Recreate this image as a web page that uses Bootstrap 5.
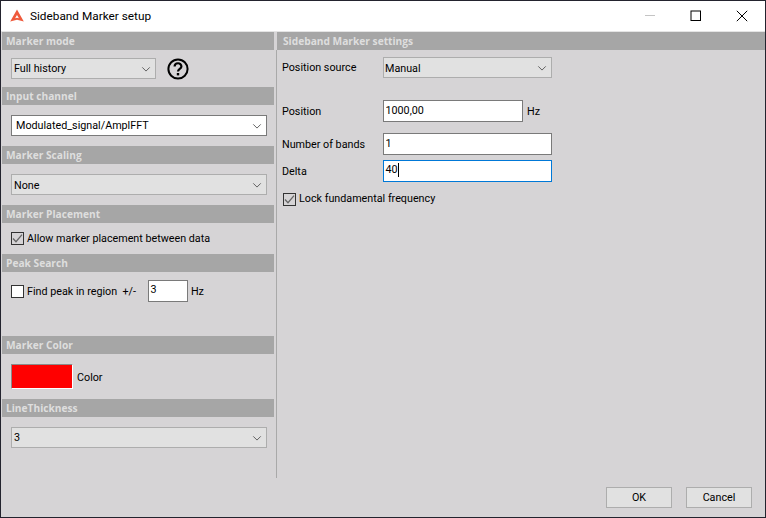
<!DOCTYPE html>
<html lang="en">
<head>
<meta charset="utf-8">
<title>Sideband Marker setup</title>
<link href="https://cdn.jsdelivr.net/npm/bootstrap@5.3.0/dist/css/bootstrap.min.css" rel="stylesheet">
<style>
html,body{height:518px;overflow:hidden;background:#d6d4d6;}
body{font-family:Roboto,"Open Sans","Liberation Sans",sans-serif;font-size:10.75px;color:#000;line-height:1.2;}
.win{width:766px;height:518px;border:1px solid #23232e;background:#d6d4d6;}
.tbar{height:31px;background:#fff;flex:none;border-bottom:1px solid #e4e4e4;padding-left:9px;}
.tbar-title{font-size:11.8px;margin-left:6px;}
.wc{width:46px;height:30px;}
.sect-left{width:275px;flex:none;height:446px;padding:0 2px 0 1px;}
.sect-right{height:446px;}
.hdr{height:18px;background:#a6a6a6;color:#dedede;font-family:"Open Sans",sans-serif;font-weight:700;font-size:10.2px;line-height:18px;padding-left:4px;flex:none;}
.hdr-r{padding-left:6px;}
.divider{width:1px;background:#a9a9a9;height:428px;margin-top:18px;flex:none;}
.body-l{padding-left:9px;padding-right:7px;}
.h37{height:37px;}.h41{height:41px;}.h31{height:31px;}.h64{height:64px;}.h45{height:45px;}
.sel{font-size:10.75px;height:21px;min-height:21px;padding:0 0 0 2px;border-radius:0;border:1px solid #adadad;background-color:#e1e1e1;color:#000;line-height:19px;background-size:10px 10px;background-position:right 4px center;--bs-form-select-bg-img:none;background-image:url("data:image/svg+xml,%3csvg xmlns='http://www.w3.org/2000/svg' viewBox='0 0 12 12'%3e%3cpath fill='none' stroke='%23555' stroke-width='1.1' d='M1.500 4l4.500 4.500 4.500-4.500'/%3e%3c/svg%3e");}
.sel-white{background-color:#fff;border-color:#7a7a7a;padding-left:4px;}
.sel-low{padding-top:1px;}
.sel-mode{width:145px;}
.sel-source{width:169px;padding-left:1px;}
.fld{font-size:10.75px;border-radius:0;border:1px solid #7a7a7a;padding:0 0 2px 1.500px;height:22px;min-height:22px;color:#000;background:#fff;line-height:18px;}
.fld-small{width:40px;height:21px;margin-left:12px;margin-right:3px;padding-bottom:4px;}
.fld-pos{width:140px;margin-right:4px;}
.fld-full{width:169px;}
.fld-focus{border-color:#0078d7;display:flex;align-items:center;}
.caret-bar{display:inline-block;width:1px;height:14px;background:#000;}
.form-check-input.chk{width:13px;height:13px;margin:0 3px 0 0;border-radius:0;border:1px solid #333;background-color:#fff;flex:none;}
.form-check-input.chk:checked{background-color:transparent;border-color:#333;background-image:url("data:image/svg+xml,%3csvg xmlns='http://www.w3.org/2000/svg' viewBox='0 0 13 13'%3e%3cpath fill='none' stroke='%23666' stroke-width='1.3' d='M2 6.500l3 3.200 6-7'/%3e%3c/svg%3e");background-size:13px 13px;}
.swatch{width:62px;height:25px;background:#f00;border:1px solid #fff;border-top-color:#8a8a8a;border-left-color:#8a8a8a;margin-right:4px;}
.nudge1{padding-top:2px;}
.nudge2{padding-top:3px;}
.help{margin-left:11px;}
.body-r{padding:7px 0 0 5px;}
.lbl{width:101px;flex:none;padding-top:2px;}
.row-src{height:21px;margin-bottom:22px;}
.row-pos{height:22px;margin-bottom:11px;}
.row-num{height:22px;margin-bottom:5px;}
.row-chk{padding-left:1px;margin-top:11px;}
.foot{height:39px;padding:9px 13px 0 0;gap:14px;flex:none;}
.dbtn{width:66px;height:21px;padding:0;border-radius:0;font-size:10.75px;line-height:19px;border:1px solid #adadad;background:#e1e1e1;color:#000;}
.logo{flex:none;}
</style>
</head>
<body>
<div class="win d-flex flex-column">
  <div class="tbar d-flex align-items-center">
    <svg class="logo" width="14" height="14" viewBox="0 0 14 14"><path fill="#ef5a3c" d="M7 .5 13.800 12.600 7 10.800.2 12.600z"/><path fill="#fff" d="M7 6 8.900 9.200 7 8.700 5.100 9.200z"/></svg>
    <span class="tbar-title">Sideband Marker setup</span>
    <div class="ms-auto d-flex">
      <div class="wc d-flex align-items-center justify-content-center"><svg width="12" height="12" viewBox="0 0 12 12"><path stroke="#c4c4c4" d="M1 5.500h10"/></svg></div>
      <div class="wc d-flex align-items-center justify-content-center"><svg width="12" height="12" viewBox="0 0 12 12"><rect x="1" y="1" width="9.500" height="9.500" fill="none" stroke="#000"/></svg></div>
      <div class="wc d-flex align-items-center justify-content-center"><svg width="12" height="12" viewBox="0 0 12 12"><path stroke="#000" fill="none" d="M.8.8l10.400 10.400M11.200.8.8 11.200"/></svg></div>
    </div>
  </div>
  <div class="d-flex flex-grow-1">
    <div class="sect-left d-flex flex-column">
      <div class="hdr">Marker mode</div>
      <div class="body-l h37 d-flex align-items-center">
        <select class="form-select sel sel-mode"><option>Full history</option></select>
        <svg class="help" width="22" height="22" viewBox="0 0 22 22"><circle cx="11" cy="11" r="9.600" fill="none" stroke="#000" stroke-width="2"/><path fill="none" stroke="#000" stroke-width="2.200" d="M7.600 8.600c0-4.400 6.800-4.400 6.800-.2 0 2.600-3.400 2.500-3.400 5.200"/><rect x="9.800" y="15" width="2.400" height="2.400"/></svg>
      </div>
      <div class="hdr">Input channel</div>
      <div class="body-l h41 d-flex align-items-center">
        <select class="form-select sel sel-white"><option>Modulated_signal/AmplFFT</option></select>
      </div>
      <div class="hdr">Marker Scaling</div>
      <div class="body-l h41 d-flex align-items-center">
        <select class="form-select sel sel-low"><option>None</option></select>
      </div>
      <div class="hdr">Marker Placement</div>
      <div class="body-l h31 d-flex align-items-center">
        <input class="form-check-input chk" type="checkbox" checked id="c1">
        <label for="c1" class="nudge1">Allow marker placement between data</label>
      </div>
      <div class="hdr">Peak Search</div>
      <div class="body-l h64 d-flex align-items-start">
        <div class="d-flex align-items-center mt-2">
          <input class="form-check-input chk" type="checkbox" id="c2">
          <label for="c2" class="nudge1">Find peak in region&nbsp; +/-</label>
          <input class="form-control fld fld-small" type="text" value="3">
          <span class="nudge1">Hz</span>
        </div>
      </div>
      <div class="hdr">Marker Color</div>
      <div class="body-l h45 d-flex align-items-center">
        <div class="swatch"></div><span class="nudge2">Color</span>
      </div>
      <div class="hdr">LineThickness</div>
      <div class="body-l h41 d-flex align-items-center">
        <select class="form-select sel"><option>3</option></select>
      </div>
    </div>
    <div class="divider"></div>
    <div class="sect-right flex-grow-1 d-flex flex-column">
      <div class="hdr hdr-r">Sideband Marker settings</div>
      <div class="body-r">
        <div class="d-flex align-items-center row-src">
          <span class="lbl">Position source</span>
          <select class="form-select sel sel-source sel-low"><option>Manual</option></select>
        </div>
        <div class="d-flex align-items-center row-pos">
          <span class="lbl">Position</span>
          <input class="form-control fld fld-pos" type="text" value="1000,00">
          <span class="nudge1">Hz</span>
        </div>
        <div class="d-flex align-items-center row-num">
          <span class="lbl">Number of bands</span>
          <input class="form-control fld fld-full" type="text" value="1">
        </div>
        <div class="d-flex align-items-center row-num">
          <span class="lbl">Delta</span>
          <div class="fld fld-full fld-focus">40<span class="caret-bar"></span></div>
        </div>
        <div class="d-flex align-items-center row-chk">
          <input class="form-check-input chk" type="checkbox" checked id="c3">
          <label for="c3">Lock fundamental frequency</label>
        </div>
      </div>
    </div>
  </div>
  <div class="foot d-flex justify-content-end align-items-start">
    <button type="button" class="btn dbtn">OK</button>
    <button type="button" class="btn dbtn">Cancel</button>
  </div>
</div>
<script src="https://cdn.jsdelivr.net/npm/bootstrap@5.3.0/dist/js/bootstrap.bundle.min.js"></script>
</body>
</html>
